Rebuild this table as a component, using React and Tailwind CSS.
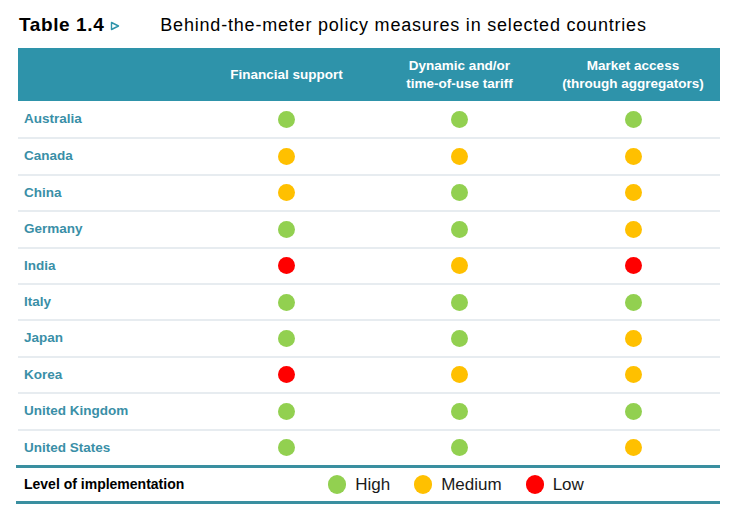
import React from "react";

const G = "bg-[#92d050]";
const O = "bg-[#ffc000]";
const R = "bg-[#ff0000]";

const rows = [
  ["Australia", G, G, G],
  ["Canada", O, O, O],
  ["China", O, G, O],
  ["Germany", G, G, O],
  ["India", R, O, R],
  ["Italy", G, G, G],
  ["Japan", G, G, O],
  ["Korea", R, O, O],
  ["United Kingdom", G, G, G],
  ["United States", G, G, O],
];

const Dot = ({ color }) => (
  <span className={`block w-[17px] h-[17px] rounded-full ${color}`} />
);

export default function App() {
  return (
    <div className="w-[739px] h-[515px] bg-white font-['Liberation_Sans',Arial,sans-serif] pt-[14px]">
      <div className="flex items-center h-[22px] pl-[19px]">
        <span className="text-[19px] font-bold text-black tracking-[0.6px]">Table 1.4</span>
        <svg width="10" height="10" viewBox="0 0 10 10" className="ml-[6px] mt-[2px]">
          <path d="M1.5 1.5 L8.5 5 L1.5 8.5 Z" fill="none" stroke="#2e93aa" strokeWidth="1.4" strokeLinejoin="round" />
        </svg>
        <span className="ml-[40px] text-[18px] text-black tracking-[0.8px]">Behind-the-meter policy measures in selected countries</span>
      </div>

      <div className="ml-[18px] w-[702px] mt-[12px]">
        <div className="flex h-[53px] bg-[#2e93aa] text-white font-bold text-[13.5px] leading-[18px]">
          <div className="w-[182px]" />
          <div className="w-[173px] flex items-center justify-center text-center">Financial support</div>
          <div className="w-[173px] flex items-center justify-center text-center">
            Dynamic and/or
            <br />
            time-of-use tariff
          </div>
          <div className="w-[174px] flex items-center justify-center text-center">
            Market access
            <br />
            (through aggregators)
          </div>
        </div>

        {rows.map(([name, a, b, c], i) => (
          <div
            key={name}
            className={`flex items-center h-[36.4px] ${i > 0 ? "border-t-2 border-[#e7ecf0]" : ""}`}
          >
            <div className="w-[182px] pl-[6px] text-[13.5px] font-bold text-[#3a8fa7]">{name}</div>
            <div className="w-[173px] flex justify-center"><Dot color={a} /></div>
            <div className="w-[173px] flex justify-center"><Dot color={b} /></div>
            <div className="w-[174px] flex justify-center"><Dot color={c} /></div>
          </div>
        ))}

        <div className="flex items-center h-[39px] border-t-[3px] border-b-[3px] border-[#3a8fa0] -ml-[2px]">
          <div className="w-[184px] pl-[8px] text-[14px] font-bold text-black">Level of implementation</div>
          <div className="flex-1 flex items-center justify-center gap-[24px] text-[17px] text-[#1a1a1a] pr-[8px]">
            <div className="flex items-center gap-[9px]">
              <span className={`block w-[18px] h-[19px] rounded-full ${G}`} />
              <span>High</span>
            </div>
            <div className="flex items-center gap-[9px]">
              <span className={`block w-[18px] h-[19px] rounded-full ${O}`} />
              <span>Medium</span>
            </div>
            <div className="flex items-center gap-[9px]">
              <span className={`block w-[18px] h-[19px] rounded-full ${R}`} />
              <span>Low</span>
            </div>
          </div>
        </div>
      </div>
    </div>
  );
}
